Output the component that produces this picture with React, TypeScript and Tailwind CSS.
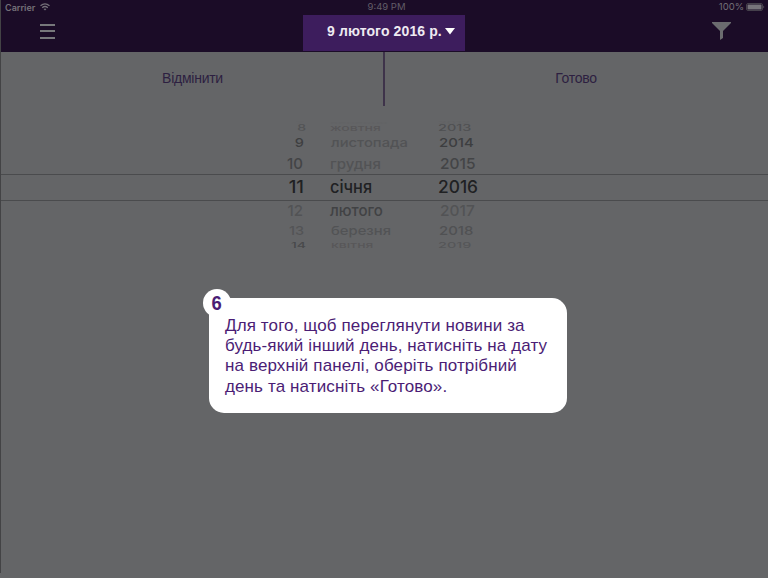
import React from 'react';

type Row = {
  day: string;
  month: string;
  year: string;
  row: string;
  dayClass: string;
  monthClass: string;
  yearClass: string;
};

const rows: Row[] = [
  { day: '7', month: 'вересня', year: '2012', row: 'h-[3px] text-[14px] overflow-hidden', dayClass: 'text-[#636466] scale-y-[0.2]', monthClass: 'text-[#626365] scale-y-[0.2]', yearClass: 'text-[#616264] scale-y-[0.2]' },
  { day: '8', month: 'жовтня', year: '2013', row: 'h-[8px] text-[14px] overflow-hidden', dayClass: 'translate-x-[2px] text-[#525355] scale-y-[0.6]', monthClass: 'text-[#585759] scale-y-[0.6]', yearClass: 'text-[#4f5052] scale-y-[0.6] scale-x-[1.03]' },
  { day: '9', month: 'листопада', year: '2014', row: 'h-[22px] text-[14.5px]', dayClass: 'text-[#3e3f41] scale-y-[0.85]', monthClass: 'translate-x-[1px] text-[#525355] scale-y-[0.85] scale-x-[1.02]', yearClass: 'translate-x-[1px] text-[#3d3e40] scale-y-[0.85] scale-x-[1.03]' },
  { day: '10', month: 'грудня', year: '2015', row: 'h-[20px] text-[15px] pb-[2px]', dayClass: '-translate-x-[1px] text-[#434446]', monthClass: 'text-[#525355] scale-y-[0.95]', yearClass: 'translate-x-[2px] text-[#434446] scale-x-[1.03]' },
  { day: '11', month: 'січня', year: '2016', row: 'h-[27px] text-[17px] border-y border-[#4a4b4d]', dayClass: 'text-[#202123] scale-x-[1.08]', monthClass: 'text-[#202123] scale-x-[0.96]', yearClass: 'text-[#202123] scale-x-[1.02]' },
  { day: '12', month: 'лютого', year: '2017', row: 'h-[20px] text-[15px] pb-[2px]', dayClass: '-translate-x-[1px] text-[#525355]', monthClass: 'text-[#414244]', yearClass: 'translate-x-[2px] text-[#525355] scale-x-[1.03]' },
  { day: '13', month: 'березня', year: '2018', row: 'h-[21px] text-[14.5px]', dayClass: 'text-[#535456] scale-y-[0.85]', monthClass: 'translate-x-[1px] text-[#525355] scale-y-[0.85] scale-x-[1.02]', yearClass: 'translate-x-[1px] text-[#505153] scale-y-[0.85] scale-x-[1.03]' },
  { day: '14', month: 'квітня', year: '2019', row: 'h-[6px] text-[14px] overflow-hidden', dayClass: 'translate-x-[2px] text-[#48494b] scale-y-[0.55]', monthClass: 'translate-x-[1px] text-[#585759] scale-y-[0.55]', yearClass: 'text-[#555658] scale-y-[0.55] scale-x-[1.03]' },
];

function Picker() {
  return (
    <div className="flex flex-col pt-[15px] font-['Inter',sans-serif] font-medium">
      {rows.map((r) => (
        <div key={r.day} className={`flex shrink-0 items-center leading-none ${r.row}`}>
          <span className={`w-[304px] shrink-0 origin-right text-right ${r.dayClass}`}>{r.day}</span>
          <span className={`ml-[26px] w-[108px] shrink-0 origin-left ${r.monthClass}`}>{r.month}</span>
          <span className={`shrink-0 origin-left ${r.yearClass}`}>{r.year}</span>
        </div>
      ))}
    </div>
  );
}

export default function App() {
  return (
    <main className="relative h-[578px] w-[768px] overflow-hidden bg-[#646567] font-['Liberation_Sans',Arial,sans-serif]">
      <header className="h-[52px] bg-[#1b0c27] text-[#747078]">
        <div className="grid h-[15px] grid-cols-3 items-center pl-[5px] pr-[3px] font-['Inter',sans-serif] text-[9.5px] leading-none">
          <div className="flex items-center gap-[5px] pb-px font-semibold">
            <span className="text-[9px]">Carrier</span>
            <svg width="10" height="8" viewBox="0 0 10 8" fill="none" stroke="currentColor" strokeWidth="1.3">
              <path d="M.5 2.7Q5-1 9.5 2.7M2.2 4.7Q5 2.2 7.8 4.7" />
              <path d="M3.5 6 5 7.5 6.5 6Q5 5 3.5 6Z" fill="currentColor" stroke="none" />
            </svg>
          </div>
          <span className="pb-px pl-[3px] text-center text-[#625d67]">9:49 PM</span>
          <div className="flex items-center justify-end gap-[2px] pb-px">
            <span>100%</span>
            <svg width="19" height="8" viewBox="0 0 19 8" fill="none">
              <rect x=".5" y=".5" width="16" height="7" rx="1.5" stroke="#45404b" />
              <rect x="1.5" y="1.5" width="14" height="5" rx=".5" fill="#77747b" />
              <path d="M17.5 2.5q1.5 1.5 0 3Z" fill="#747078" />
            </svg>
          </div>
        </div>
        <div className="flex h-[36px] justify-between">
          <div className="w-[303px] pl-[40px] pt-[9px]">
            <svg width="15" height="15" viewBox="0 0 15 15" fill="#77787b">
              <path d="M0 0h15v2H0zM0 6h15v2H0zM0 13h15v2H0z" />
            </svg>
          </div>
          <div className="flex h-[36px] w-[162px] items-start bg-[#3d1d5d] pl-[24px] pt-[8px] text-[14px] font-bold leading-4 text-[#eeeaf1]">
            <span className="whitespace-nowrap tracking-[0.12px]">9 лютого 2016 р.</span>
            <svg className="ml-[3px] mt-[5px] shrink-0" width="10" height="7" viewBox="0 0 10 7">
              <path d="M0 0h10L5 6.5Z" fill="#fff" />
            </svg>
          </div>
          <div className="flex w-[303px] justify-end pr-[37px] pt-[7px]">
            <svg width="19" height="18" viewBox="0 0 19 18" fill="#6b6c6f">
              <path d="M0 0h19v1L11 9v7l-3 2V9L0 1Z" />
            </svg>
          </div>
        </div>
      </header>

      <nav className="flex h-[54px] text-[14px] leading-[52px] tracking-[-0.25px] text-[#2d1f41]">
        <div className="w-[385px] border-r-2 border-[#3e334a] pl-[2px] text-center">Відмінити</div>
        <div className="flex-1 pr-[1px] text-center">Готово</div>
      </nav>

      <Picker />

      <section className="absolute left-[209px] top-[298px] h-[115px] w-[358px] rounded-[15px] bg-white pl-[16px] pt-[18px] text-[#4b1d75]">
        <span className="absolute -left-[6px] -top-[9px] h-[28px] w-[28px] rounded-full bg-white text-center text-[20px] font-bold leading-[28px]">
          <span className="inline-block scale-x-[0.92]">6</span>
        </span>
        <p className="whitespace-nowrap text-[17px] leading-[20.2px] tracking-[0.12px]">
          Для того, щоб переглянути новини за<br />
          будь-який інший день, натисніть на дату<br />
          на верхній панелі, оберіть потрібний<br />
          день та натисніть «Готово».
        </p>
      </section>

      <div className="absolute left-0 top-0 h-[573px] w-px bg-[#434345]" />
    </main>
  );
}
